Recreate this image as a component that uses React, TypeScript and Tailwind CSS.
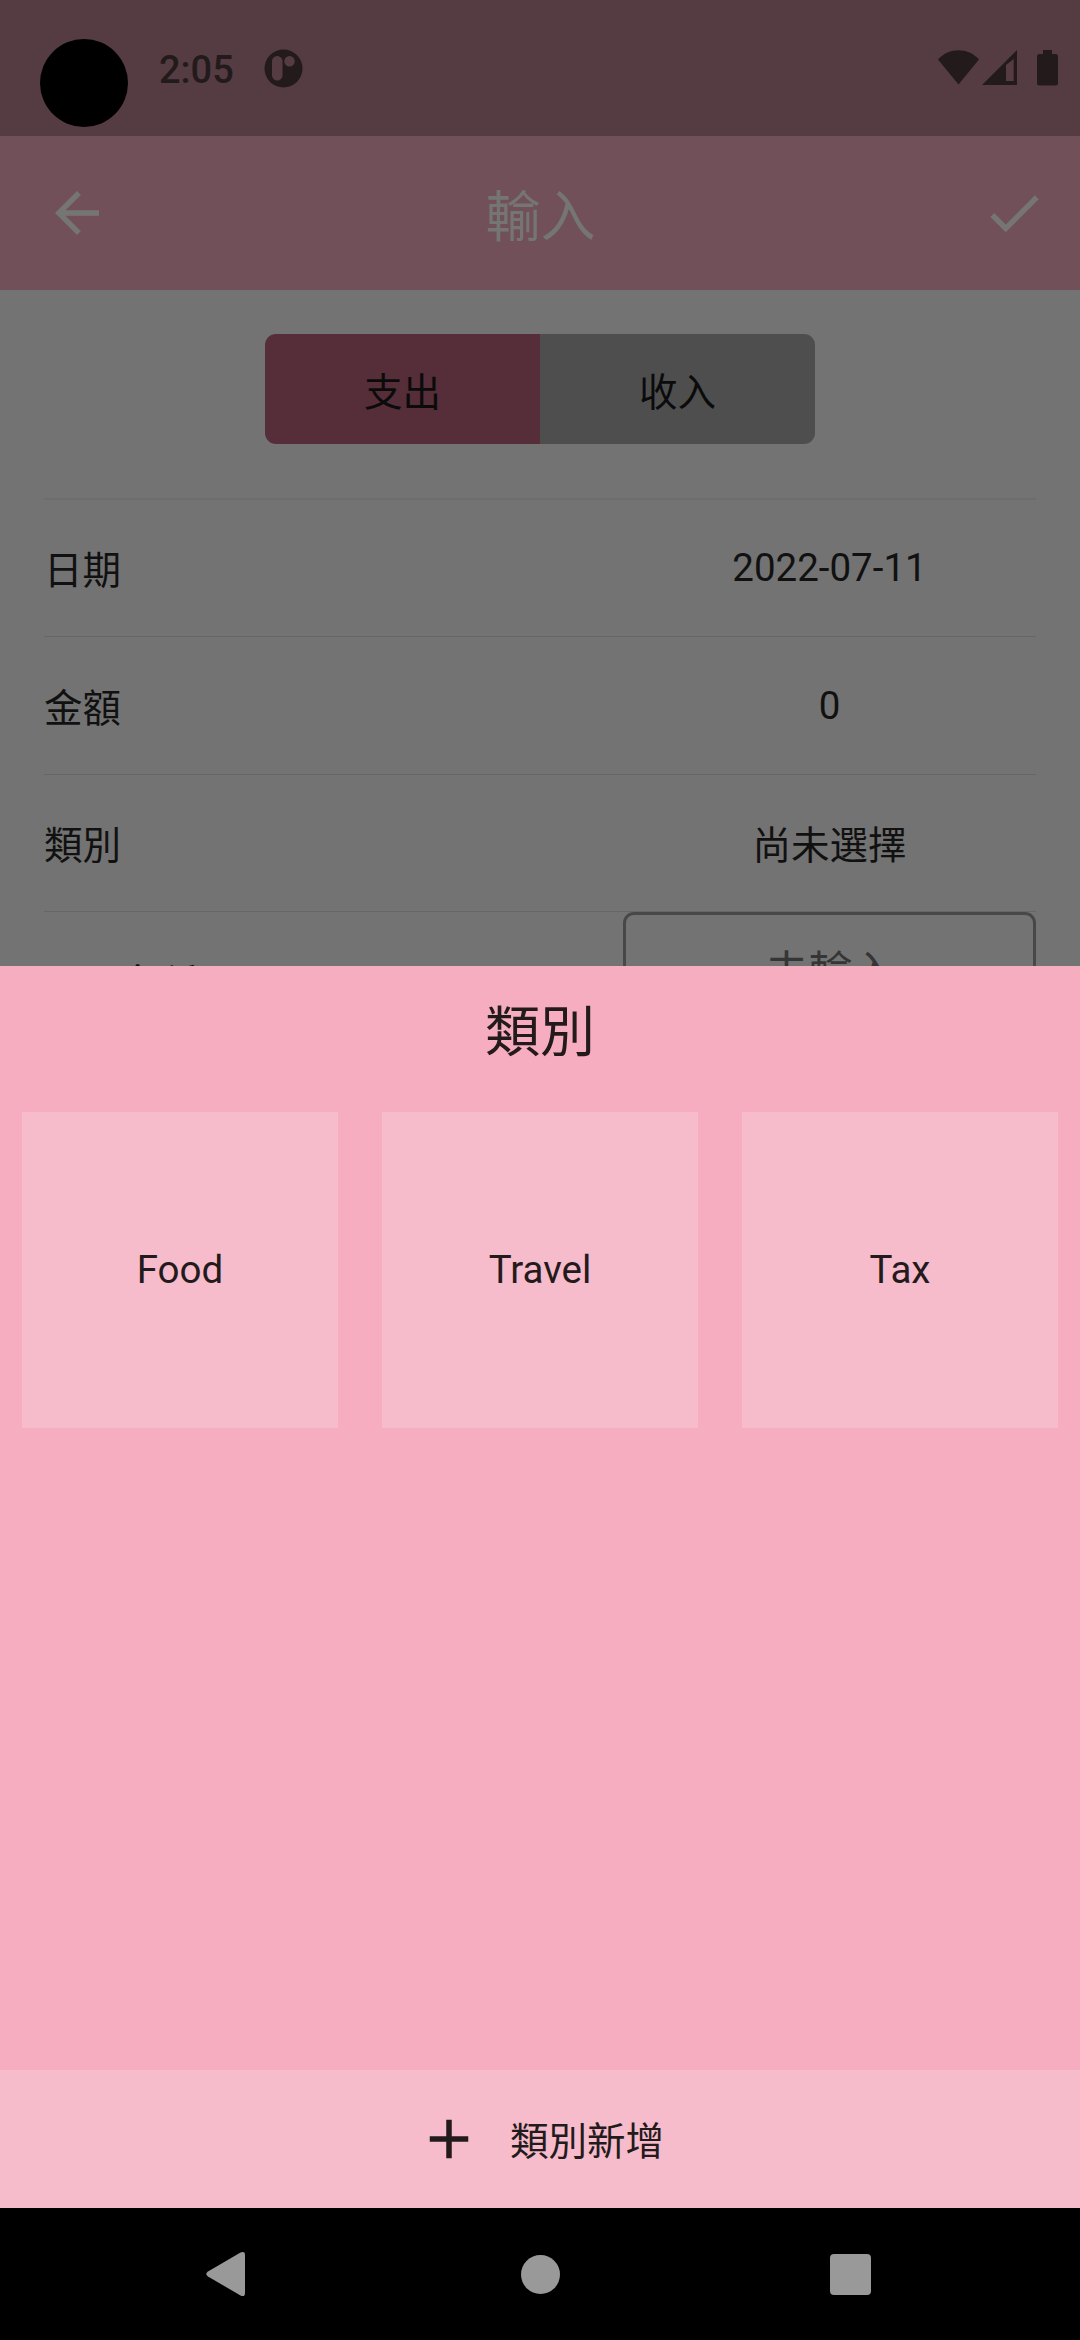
import React from "react";

function StatusBar() {
  return (
    <div className="flex h-[136px] shrink-0 bg-[#553c42] text-[#231a1c]">
      <div className="ml-[40px] mt-[39px] size-[88px] rounded-full bg-black" />
      <div className="ml-[31px] mt-[46px] h-[48px] w-[105px] text-[38px] leading-[48px] font-medium">2:05</div>
      <svg className="mt-[49px] size-[39px]" viewBox="0 0 39 39">
        <circle cx="19.5" cy="19.5" r="19" fill="#231a1c" />
        <rect x="8" y="7" width="10.5" height="24.5" rx="5.2" fill="#553c42" />
        <circle cx="25.5" cy="12.3" r="5.2" fill="#553c42" />
      </svg>
      <svg className="mt-[49px] mr-[20px] ml-auto h-[40px] w-[124px]" viewBox="936 49 124 40" fill="#231a1c">
        <path d="M938 59.5C949 47.300 968 47.300 979 59.5L958.5 84.5Z" />
        <path fillRule="evenodd" d="M982 85L1017 50V85ZM1006 65V81H1013.7V59Z" />
        <path d="M1043 50H1052V54H1055.5Q1058 54 1058 56.5V83Q1058 85.5 1055.5 85.5H1039.5Q1037 85.5 1037 83V56.5Q1037 54 1039.5 54H1043Z" />
      </svg>
    </div>
  );
}

function AppBar() {
  return (
    <div className="flex h-[154px] shrink-0 items-center bg-[#715059] pr-[33px] pl-[44px] text-[#757575]">
      <svg className="size-[66px]" viewBox="0 0 24 24" fill="currentColor">
        <path d="M20 11H7.83l5.59-5.59L12 4l-8 8 8 8 1.41-1.41L7.83 13H20v-2z" />
      </svg>
      <h1 className="flex-1 pt-[8px] pr-[10px] text-center text-[55px] leading-[66px] font-normal">輸入</h1>
      <svg className="size-[66px]" viewBox="0 0 24 24" fill="currentColor">
        <path d="M9 16.17L4.83 12l-1.42 1.41L9 19 21 7l-1.41-1.41L9 16.17z" />
      </svg>
    </div>
  );
}

type RowProps = { label: string; value: string; height: string; valueClass: string };

function Row({ label, value, height, valueClass }: RowProps) {
  return (
    <div className={`flex items-center border-b border-[#666666] ${height}`}>
      <div className="flex-1 pt-[6px]">{label}</div>
      <div className={`w-[413px] text-center ${valueClass}`}>{value}</div>
    </div>
  );
}

function EntryForm() {
  return (
    <div className="flex h-[676px] shrink-0 flex-col overflow-hidden bg-[#737373] px-[44px] pt-[44px] text-[38.5px] leading-[46px] text-[#111111]">
      <div className="flex h-[110px] w-[550px] shrink-0 self-center overflow-hidden rounded-[11px] text-[#0b0b0b]">
        <div className="flex flex-1 items-center justify-center bg-[#562e39] pt-[8px]">支出</div>
        <div className="flex flex-1 items-center justify-center bg-[#4e4e4e] pt-[8px]">收入</div>
      </div>
      <div className="mt-[54px] h-[2px] shrink-0 bg-[#6d6d6d]" />
      <Row label="日期" value="2022-07-11" height="h-[137px] shrink-0" valueClass="pt-0" />
      <Row label="金額" value="0" height="h-[138px] shrink-0" valueClass="pt-0" />
      <Row label="類別" value="尚未選擇" height="h-[137px] shrink-0" valueClass="pt-[6px]" />
      <div className="flex h-[138px] shrink-0 items-start">
        <div className="flex-1 pt-[49px]">項目名稱</div>
        <div className="flex h-[138px] w-[413px] items-start justify-center rounded-[11px] border-[3px] border-[#484848] pt-[30px] pl-[2px] text-[44px] leading-[56px] text-[#353535]">
          未輸入
        </div>
      </div>
    </div>
  );
}

function CategorySheet() {
  return (
    <div className="flex h-[1242px] shrink-0 flex-col bg-[#f7adc0] text-[38.5px] text-[#231a1c]">
      <h2 className="flex h-[146px] items-center justify-center pb-[15px] text-[55px] leading-[66px] font-normal">類別</h2>
      <div className="grid grid-cols-3 gap-[44px] px-[22px]">
        {["Food", "Travel", "Tax"].map((name) => (
          <div key={name} className="flex h-[316px] items-center justify-center bg-[#f7bccb]">
            {name}
          </div>
        ))}
      </div>
      <div className="mt-auto flex h-[138px] items-center justify-center gap-[28px] bg-[#f7bccb]">
        <svg className="size-[66px]" viewBox="0 0 24 24" fill="currentColor">
          <path d="M19 13h-6v6h-2v-6H5v-2h6V5h2v6h6v2z" />
        </svg>
        <span className="pt-[6px]">類別新增</span>
      </div>
    </div>
  );
}

function NavBar() {
  return (
    <div className="flex h-[132px] shrink-0 items-center bg-black pl-[206px]">
      <svg className="h-[46px] w-[40px]" viewBox="0 0 40 46" fill="#999999">
        <path d="M2 20.5L34.5 1.5Q39 -.5 39 4V42Q39 46.5 34.5 44.5L2 25.5Q-1.5 23 2 20.5Z" />
      </svg>
      <div className="ml-[275px] size-[39px] rounded-full bg-[#999999]" />
      <div className="ml-[270px] size-[41px] rounded-[4px] bg-[#999999]" />
    </div>
  );
}

export default function App() {
  return (
    <div className="flex h-[2340px] w-[1080px] flex-col overflow-hidden font-['Roboto','Noto_Sans_CJK_SC',sans-serif]">
      <StatusBar />
      <AppBar />
      <EntryForm />
      <CategorySheet />
      <NavBar />
    </div>
  );
}
